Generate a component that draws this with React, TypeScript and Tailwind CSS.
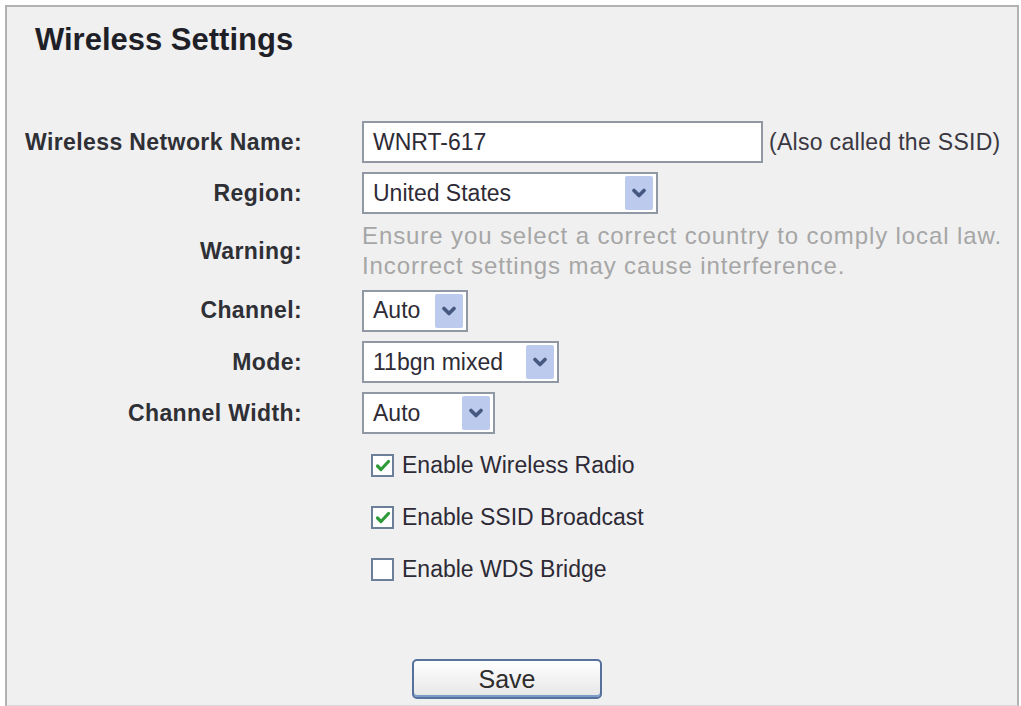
import { ReactNode } from 'react';

const FONT = 'font-["Liberation_Sans",Arial,sans-serif]';

function Chevron() {
  return (
    <svg width="16" height="10" viewBox="0 0 16 10" aria-hidden="true">
      <path d="M3 2.5 L8 7.5 L13 2.5" fill="none" stroke="#46587f" strokeWidth="3.6" strokeLinecap="round" strokeLinejoin="round" />
    </svg>
  );
}

function Select({ value, width }: { value: string; width: string }) {
  return (
    <div className={`${width} h-[42px] flex items-center justify-between border-2 border-[#8f98a3] bg-white pl-[9px] pr-[3px]`}>
      <span className="text-[23px] text-[#2e2b36]">{value}</span>
      <span className="w-[28px] h-[34px] flex items-center justify-center bg-[#bccaee] rounded-[2px]">
        <Chevron />
      </span>
    </div>
  );
}

function Row({ label, children, className = 'h-[42px]' }: { label: string; children: ReactNode; className?: string }) {
  return (
    <div className={`flex items-center ${className}`}>
      <div className="w-[295px] text-right text-[23px] font-bold tracking-[0.4px] text-[#2f2f36]">{label}</div>
      <div className="ml-[60px] flex items-center">{children}</div>
    </div>
  );
}

function Check({ label, checked }: { label: string; checked: boolean }) {
  return (
    <label className="flex items-center h-[40px] pl-[364px]">
      <span className="w-[23px] h-[23px] border-2 border-[#6c7f98] bg-white flex items-center justify-center">
        {checked && (
          <svg width="16" height="13" viewBox="0 0 16 13" aria-hidden="true">
            <path d="M2.5 7 L6 10.5 L13.5 2.5" fill="none" stroke="#2e9a38" strokeWidth="3.2" strokeLinecap="round" strokeLinejoin="round" />
          </svg>
        )}
      </span>
      <span className="ml-[8px] text-[23px] text-[#2d2a36]">{label}</span>
    </label>
  );
}

export default function App() {
  return (
    <div className={`w-[1021px] h-[706px] bg-white pt-[5px] pl-[5px] overflow-hidden ${FONT}`}>
      <div className="w-[1014px] h-[702px] border-2 border-[#b2b2b2] border-b-[#d8d8d8] bg-[#f0f0f0]">
        {/* Title */}
        <h1 className="pl-[28px] pt-[15px] text-[31px] leading-[36px] font-bold text-[#1f1f28]">Wireless Settings</h1>

        <div className="mt-[63px] flex flex-col">
          <Row label="Wireless Network Name:">
            <div className="w-[401px] h-[42px] border-2 border-[#8f98a3] bg-white pl-[9px] flex items-center text-[23px] text-[#2e2b36]">
              WNRT-617
            </div>
            <span className="ml-[6px] text-[23px] tracking-[0.3px] text-[#3a3742]">(Also called the SSID)</span>
          </Row>

          <Row label="Region:" className="h-[42px] mt-[9px]">
            <Select value="United States" width="w-[296px]" />
          </Row>

          <Row label="Warning:" className="h-[62px] mt-[6px]">
            <div className="text-[24px] leading-[30px] tracking-[0.9px] text-[#a6a6a6]">
              <div>Ensure you select a correct country to comply local law.</div>
              <div>Incorrect settings may cause interference.</div>
            </div>
          </Row>

          <Row label="Channel:" className="h-[43px] mt-[7px]">
            <Select value="Auto" width="w-[106px]" />
          </Row>

          <Row label="Mode:" className="h-[42px] mt-[9px]">
            <Select value="11bgn mixed" width="w-[197px]" />
          </Row>

          <Row label="Channel Width:" className="h-[42px] mt-[9px]">
            <Select value="Auto" width="w-[133px]" />
          </Row>

          <div className="mt-[11px] flex flex-col gap-[12px]">
            <Check label="Enable Wireless Radio" checked />
            <Check label="Enable SSID Broadcast" checked />
            <Check label="Enable WDS Bridge" checked={false} />
          </div>

          <div className="mt-[70px] pl-[405px]">
            <button className="w-[190px] h-[40px] rounded-[5px] border-2 border-[#56729c] bg-gradient-to-b from-white to-[#e6e6e6] text-[25px] leading-[30px] text-[#2d2d2d] shadow-[inset_0_-2px_0_#7d9bc7]">
              Save
            </button>
          </div>
        </div>
      </div>
    </div>
  );
}
